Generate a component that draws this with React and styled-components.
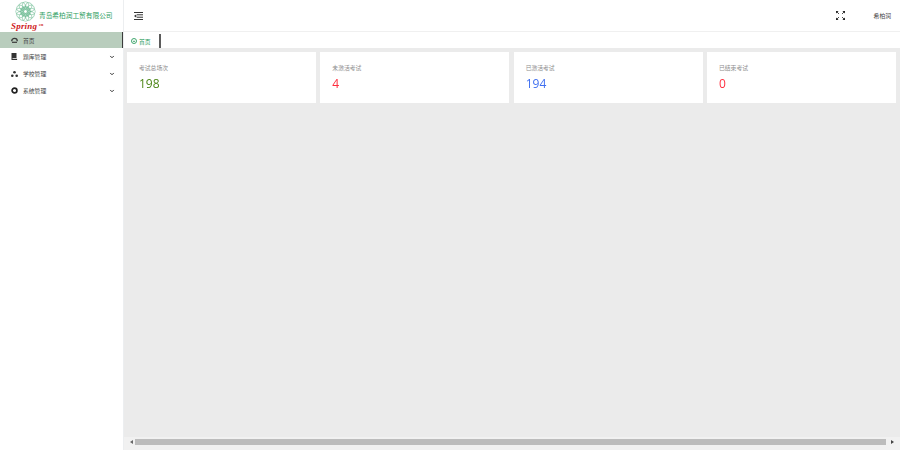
import styled, {createGlobalStyle} from "styled-components"
import {ChevronDown} from "lucide-react"

const GlobalStyle = createGlobalStyle`
    html, body {
        margin: 0;
        padding: 0;
        background: #fff;
    }

    body {
        font-family: "Noto Sans CJK SC", "Noto Sans", sans-serif;
    }
`

const Page = styled.div`
    display: flex;
    width: 900px;
    height: 450px;
    overflow: hidden;
`

const Sidebar = styled.aside`
    width: 123px;
    flex-shrink: 0;
    background: #fff;
`

const LogoBar = styled.div`
    display: flex;
    align-items: flex-start;
    height: 32px;
    padding-left: 11px;
    box-sizing: border-box;
`

const LogoMark = styled.div`
    display: flex;
    flex-direction: column;
    align-items: flex-start;
    width: 30px;
    flex-shrink: 0;
    padding-top: 1px;
`

const Flower = styled.svg`
    margin-left: 4px;
`

const Brand = styled.span`
    font-family: "Liberation Serif", serif;
    font-style: italic;
    font-weight: bold;
    font-size: 9px;
    line-height: 9px;
    letter-spacing: 0.2px;
    color: #cf1a22;
    white-space: nowrap;

    sup {
        font-size: 5px;
        line-height: 0;
        margin-left: 1px;
        vertical-align: 2px;
    }
`

const CompanyName = styled.span`
    font-size: 6.7px;
    line-height: 10px;
    margin: 10px 0 0 -2px;
    color: #2b9d5e;
    white-space: nowrap;
`

const MenuItem = styled.div`
    display: flex;
    align-items: center;
    height: ${({$active}) => ($active ? "16px" : "17px")};
    padding: 0 8px 0 11px;
    font-size: 5.8px;
    color: #444;
    background: ${({$active}) => ($active ? "#b9cdbd" : "transparent")};
    border-right: ${({$active}) => ($active ? "1px solid #3c3c3c" : "none")};
`

const MenuLabel = styled.span`
    flex: 1;
    margin-left: 5px;
`

const MenuChevron = styled(ChevronDown)`
    color: #333;
`

const Main = styled.main`
    flex: 1;
    display: flex;
    flex-direction: column;
    min-width: 0;
    border-left: 1px solid #eceef0;
`

const TopBar = styled.header`
    display: flex;
    align-items: center;
    height: 31px;
    flex-shrink: 0;
    padding: 0 9px 0 10px;
    border-bottom: 1px solid #f0f0f0;
`

const TopSpacer = styled.div`
    flex: 1;
`

const UserName = styled.span`
    margin-left: 29px;
    font-size: 5.8px;
    color: #444;
`

const TabBar = styled.nav`
    display: flex;
    align-items: flex-end;
    height: 16px;
    flex-shrink: 0;
    padding-left: 7px;
`

const Tab = styled.div`
    display: flex;
    align-items: center;
    gap: 2px;
    height: 14px;
    padding-right: 8px;
    font-size: 5.8px;
    color: #2b9d5e;
    border-right: 2px solid #5c5c5c;
`

const Content = styled.section`
    flex: 1;
    display: flex;
    flex-direction: column;
    min-height: 0;
    padding-top: 4px;
    background: #ebebeb;
`

const CardGrid = styled.div`
    display: grid;
    grid-template-columns: repeat(4, 189px);
    justify-content: space-between;
    padding: 0 4px 0 3px;
`

const Card = styled.div`
    height: 51px;
    padding: 12px 12px 0;
    box-sizing: border-box;
    background: #fff;
`

const CardLabel = styled.div`
    font-size: 5.8px;
    line-height: 8px;
    color: #8c8c8c;
`

const CardValue = styled.div`
    margin-top: 4px;
    font-family: "Open Sans", sans-serif;
    font-size: 12px;
    line-height: 16px;
    color: ${({$color}) => $color};
    will-change: opacity;
`

const ContentFill = styled.div`
    flex: 1;
`

const ScrollBar = styled.div`
    display: flex;
    align-items: center;
    height: 13px;
    padding: 0 6px 3px;
    box-sizing: border-box;
    background: #f1f1f1;
`

const ScrollThumb = styled.div`
    flex: 1;
    height: 6px;
    margin: 0 5px 0 2px;
    background: #bcbcbc;
`

const ScrollArrow = styled.span`
    width: 0;
    height: 0;
    border-top: 2px solid transparent;
    border-bottom: 2px solid transparent;
    ${({$dir}) => ($dir === "left" ? "border-right: 3px solid #666;" : "border-left: 3px solid #444;")}
`

const petals = Array.from({length: 12}, (_, i) => i * 30)

const LogoFlower = () => (
    <Flower width="21" height="21" viewBox="0 0 42 42" fill="none" stroke="#6dbb92" strokeWidth="1.1">
        {petals.map(angle => (
            <circle key={angle} cx="21" cy="8" r="6.5" transform={`rotate(${angle} 21 21)`}/>
        ))}
        {petals.map(angle => (
            <circle key={angle} cx="21" cy="14" r="3.6" transform={`rotate(${angle + 15} 21 21)`}/>
        ))}
    </Flower>
)

const OutdentIcon = () => (
    <svg width="9" height="8" viewBox="0 0 9 8" fill="#333">
        <rect width="9" height="1"/>
        <rect x="3" y="2.3" width="6" height="1"/>
        <rect x="3" y="4.7" width="6" height="1"/>
        <rect y="7" width="9" height="1"/>
        <path d="M2.4 2.2v3.6L0 4z"/>
    </svg>
)

const FullscreenIcon = () => (
    <svg width="9" height="9" viewBox="0 0 9 9" fill="#222" stroke="#222" strokeWidth="0.8">
        <path d="M1 1l2 2M8 1L6 3M1 8l2-2M8 8L6 6"/>
        <path stroke="none" d="M0 0h2.6L0 2.6zM9 0v2.6L6.4 0zM0 9V6.4L2.6 9zM9 9H6.4L9 6.4z"/>
    </svg>
)

const HomeIcon = () => (
    <svg width="7" height="6" viewBox="0 0 7 6" fill="none" stroke="#3a3a3a" strokeWidth="1.3">
        <path d="M.7 4.2a2.8 2.8 0 0 1 5.6 0"/>
        <path d="M1 5.3h5" strokeWidth="1.2"/>
    </svg>
)

const BookIcon = () => (
    <svg width="7" height="7" viewBox="0 0 7 7" fill="#333">
        <path d="M.5 0h5v5H1.5v.8h4.6V7H.5z"/>
    </svg>
)

const NetworkIcon = () => (
    <svg width="7" height="6" viewBox="0 0 7 6" fill="#333">
        <circle cx="3.5" cy="1.3" r="1.3"/>
        <circle cx="1.3" cy="4.7" r="1.3"/>
        <circle cx="5.7" cy="4.7" r="1.3"/>
    </svg>
)

const GearIcon = () => (
    <svg width="7" height="7" viewBox="0 0 7 7" fill="none" stroke="#222" strokeWidth="1.7">
        <circle cx="3.5" cy="3.5" r="2.4"/>
    </svg>
)

const TabIcon = () => (
    <svg width="6" height="6" viewBox="0 0 6 6" fill="none" stroke="#2b9d5e" strokeWidth="0.9">
        <circle cx="3" cy="3" r="2.5"/>
        <path d="M2 3.3h2"/>
    </svg>
)

const menu = [
    {label: "题库管理", icon: <BookIcon/>},
    {label: "学校管理", icon: <NetworkIcon/>},
    {label: "系统管理", icon: <GearIcon/>},
]

const stats = [
    {label: "考试总场次", value: 198, color: "#4c8516"},
    {label: "未激活考试", value: 4, color: "#ff2d3d"},
    {label: "已激活考试", value: 194, color: "#3f6ff0"},
    {label: "已结束考试", value: 0, color: "#ff3040"},
]

export default function App() {
    return (
        <>
            <GlobalStyle/>
            <Page>
                <Sidebar>
                    <LogoBar>
                        <LogoMark>
                            <LogoFlower/>
                            <Brand>Spring<sup>™</sup></Brand>
                        </LogoMark>
                        <CompanyName>青岛希柏润工贸有限公司</CompanyName>
                    </LogoBar>
                    <MenuItem $active>
                        <HomeIcon/>
                        <MenuLabel>首页</MenuLabel>
                    </MenuItem>
                    {menu.map(item => (
                        <MenuItem key={item.label}>
                            {item.icon}
                            <MenuLabel>{item.label}</MenuLabel>
                            <MenuChevron size={6} strokeWidth={4}/>
                        </MenuItem>
                    ))}
                </Sidebar>
                <Main>
                    <TopBar>
                        <OutdentIcon/>
                        <TopSpacer/>
                        <FullscreenIcon/>
                        <UserName>希柏润</UserName>
                    </TopBar>
                    <TabBar>
                        <Tab>
                            <TabIcon/>
                            首页
                        </Tab>
                    </TabBar>
                    <Content>
                        <CardGrid>
                            {stats.map(stat => (
                                <Card key={stat.label}>
                                    <CardLabel>{stat.label}</CardLabel>
                                    <CardValue $color={stat.color}>{stat.value}</CardValue>
                                </Card>
                            ))}
                        </CardGrid>
                        <ContentFill/>
                        <ScrollBar>
                            <ScrollArrow $dir="left"/>
                            <ScrollThumb/>
                            <ScrollArrow $dir="right"/>
                        </ScrollBar>
                    </Content>
                </Main>
            </Page>
        </>
    )
}
